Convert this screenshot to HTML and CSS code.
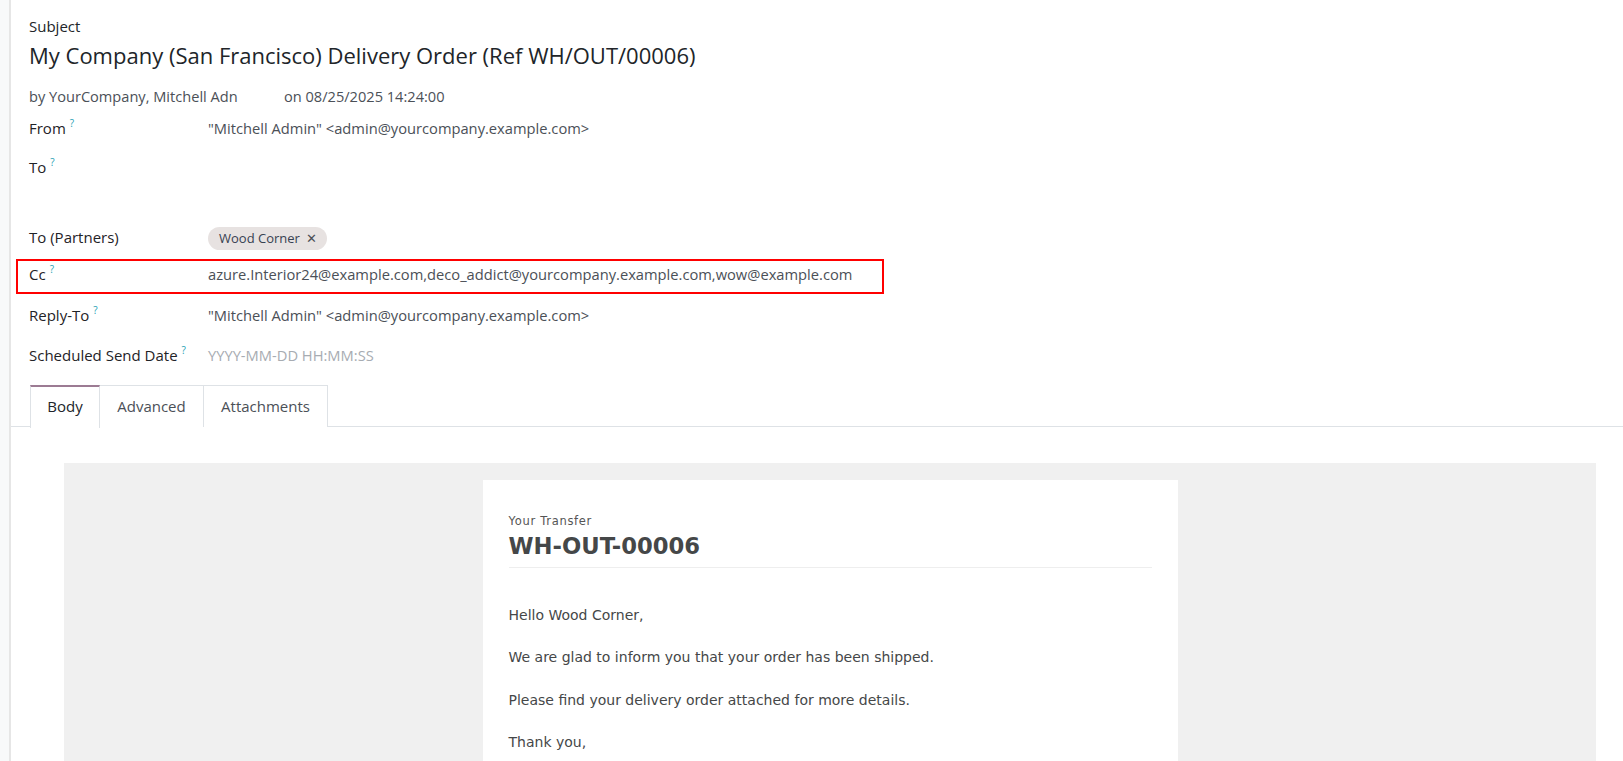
FILE: index.html
```html
<!DOCTYPE html>
<html lang="en">
<head>
<meta charset="utf-8">
<title>Delivery Order</title>
<link rel="stylesheet" href="styles.css">
</head>
<body>
<div class="app">
  <aside class="strip"></aside>
  <main class="sheet">
    <section class="form">
      <div class="subject-label">Subject</div>
      <h1 class="subject">My Company (San Francisco) Delivery Order (Ref WH/OUT/00006)</h1>
      <div class="meta">
        <span class="meta-by">by YourCompany, Mitchell Adn</span>
        <span class="meta-on">on 08/25/2025 14:24:00</span>
      </div>
      <div class="row"><div class="label">From<sup class="help">?</sup></div><div class="value">"Mitchell Admin" &lt;admin@yourcompany.example.com&gt;</div></div>
      <div class="row row-tall"><div class="label">To<sup class="help">?</sup></div><div class="value"></div></div>
      <div class="row"><div class="label">To (Partners)</div><div class="value"><span class="tag">Wood Corner <span class="tag-x">✕</span></span></div></div>
      <div class="row row-cc"><div class="label">Cc<sup class="help">?</sup></div><div class="value">azure.Interior24@example.com,deco_addict@yourcompany.example.com,wow@example.com</div></div>
      <div class="row row-reply"><div class="label">Reply-To<sup class="help">?</sup></div><div class="value">"Mitchell Admin" &lt;admin@yourcompany.example.com&gt;</div></div>
      <div class="row"><div class="label">Scheduled Send Date<sup class="help">?</sup></div><div class="value placeholder">YYYY-MM-DD HH:MM:SS</div></div>
    </section>
    <nav class="tabs">
      <div class="tab tab-body active">Body</div>
      <div class="tab tab-adv">Advanced</div>
      <div class="tab tab-att">Attachments</div>
    </nav>
    <section class="tab-content">
      <div class="preview">
        <div class="card">
          <div class="card-kicker">Your Transfer</div>
          <div class="card-title">WH-OUT-00006</div>
          <div class="card-rule"></div>
          <p class="card-p">Hello Wood Corner,</p>
          <p class="card-p">We are glad to inform you that your order has been shipped.</p>
          <p class="card-p">Please find your delivery order attached for more details.</p>
          <p class="card-p">Thank you,</p>
        </div>
      </div>
    </section>
  </main>
</div>
</body>
</html>
```
FILE: styles.css
```css
* { box-sizing: border-box; }
html, body { margin: 0; padding: 0; height: 100%; overflow: hidden; }
body {
  font-family: "Open Sans", "Noto Sans", sans-serif;
  font-size: 15px;
  color: #212529;
  background: #fff;
}
.app { display: flex; height: 761px; }
.strip {
  width: 11px;
  flex: none;
  background: #f8f9fa;
  border-right: 2px solid #e6e6e6;
}
.sheet { flex: 1; display: flex; flex-direction: column; min-width: 0; }

.form { padding: 14px 0 0 18px; }
.subject-label { font-weight: 500; line-height: 24px; height: 24px; }
.subject {
  margin: 2px 0 0;
  font-size: 22px;
  font-weight: 400;
  line-height: 30px;
  color: #212529;
}
.meta {
  display: flex;
  margin-top: 15px;
  line-height: 22px;
  color: #4b5057;
  font-size: 14.6px;
}
.meta-by { width: 255px; overflow: hidden; white-space: nowrap; }

.row { display: flex; height: 39px; padding-top: 10px; line-height: 20px; }
.row:nth-child(4) { margin-top: 1px; }
.row-tall { height: 70px; }
.row-reply { height: 39.5px; }
.label { width: 179px; flex: none; font-weight: 500; color: #1f2327; }
.value { color: #4b5057; white-space: nowrap; font-size: 14.7px; }
.placeholder { color: #a7acb2; }
.help {
  color: #1f9fb4;
  font-size: 10px;
  font-weight: 500;
  margin-left: 4px;
  vertical-align: top;
  position: relative;
  top: -5px;
}
.row-cc {
  width: 868px;
  height: 35px;
  margin: 3px 0 1px -13px;
  padding: 3px 0 0 11px;
  border: 2px solid #f00;
}
.tag {
  display: inline-flex;
  align-items: center;
  height: 23px;
  padding: 0 10px 0 11px;
  margin-top: -1px;
  border-radius: 12px;
  background: #e7e2e1;
  color: #374151;
  font-size: 13px;
  font-weight: 500;
}
.tag-x { margin-left: 6px; font-size: 13px; color: #4b4f55; }

.tabs {
  display: flex;
  margin-top: 11px;
  padding-left: 19px;
  border-bottom: 1px solid #dee2e6;
  height: 42px;
}
.tab {
  height: 42px;
  line-height: 40px;
  border: 1px solid #dee2e6;
  border-left-width: 0;
  border-bottom: 0;
  color: #4b5057;
  background: #fff;
  text-align: center;
}
.tab-body {
  width: 70px;
  border-left-width: 1px;
  border-top: 2px solid #9c7b93;
  color: #212529;
  height: 43px;
  line-height: 39px;
}
.tab-adv { width: 104px; }
.tab-att { width: 124px; }

.tab-content { padding: 36px 27px 0 53px; flex: 1; min-height: 0; }
.preview {
  background: #f0f0f0;
  padding-top: 17px;
  height: 100%;
}
.card {
  width: 695px;
  margin: 0 auto;
  background: #fff;
  padding: 34px 26px 0;
  height: 100%;
  font-family: "DejaVu Sans", Verdana, sans-serif;
  color: #454748;
}
.card-kicker { font-size: 11.5px; letter-spacing: 0.7px; line-height: 14px; color: #555; }
.card-title {
  font-size: 22.7px;
  font-weight: bold;
  line-height: 28px;
  margin-top: 4px;
  color: #454748;
}
.card-rule { height: 1px; background: #eeeeee; margin-top: 7px; }
.card-p { margin: 0; font-size: 14px; line-height: 16px; }
.card-p:first-of-type { margin-top: 39px; }
.card-p + .card-p { margin-top: 26.5px; }
```
